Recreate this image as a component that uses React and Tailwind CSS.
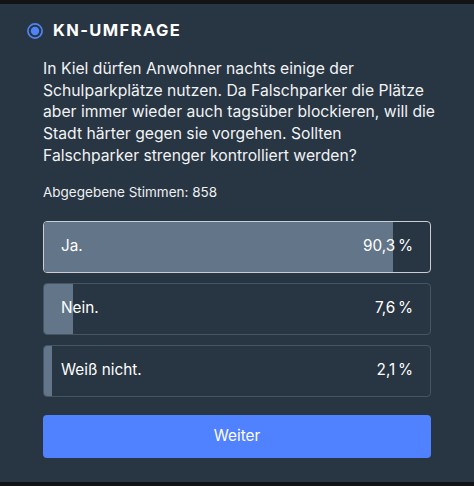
export default function App() {
  const options = [
    { label: "Ja.", value: 90.3, selected: true },
    { label: "Nein.", value: 7.6 },
    { label: "Weiß nicht.", value: 2.1 },
  ];

  return (
    <div className="w-[474px] h-[486px] bg-[#121314] flex flex-col font-['Inter',sans-serif] text-white">
      <div className="h-[4px] shrink-0" />
      <div className="flex-1 bg-[#283542] flex flex-col">
        {/* Header */}
        <div className="flex items-center gap-[10px] pl-[27px] pt-[15px] h-[38px]">
          <svg width="16" height="16" viewBox="0 0 16 16" className="shrink-0">
            <circle cx="8" cy="8" r="7.1" fill="none" stroke="#4f84f7" strokeWidth="1.7" />
            <circle cx="8" cy="8" r="4.2" fill="#4f84f7" />
          </svg>
          <span className="text-[16.5px] font-bold tracking-[0.085em] leading-none">KN-UMFRAGE</span>
        </div>

        <div className="px-[43px] pt-[16px] flex flex-col">
          <p className="text-[15.7px] leading-[21.7px] text-[#f1f3f5] whitespace-nowrap">
            In Kiel dürfen Anwohner nachts einige der
            <br />
            Schulparkplätze nutzen. Da Falschparker die Plätze
            <br />
            aber immer wieder auch tagsüber blockieren, will die
            <br />
            Stadt härter gegen sie vorgehen. Sollten
            <br />
            Falschparker strenger kontrolliert werden?
          </p>

          <p className="text-[13.5px] leading-[18px] mt-[16px] text-[#eef0f2]">Abgegebene Stimmen: 858</p>

          <div className="flex flex-col gap-[10px] mt-[20px]">
            {options.map((o) => (
              <div
                key={o.label}
                className={
                  "relative h-[52px] rounded-[4px] overflow-hidden flex items-center justify-between px-[17px] " +
                  (o.selected ? "border-[1.5px] border-[#c9ced3]" : "border border-[#475563]")
                }
              >
                <div
                  className="absolute left-0 top-0 bottom-0 bg-[#637588]"
                  style={{ width: `${o.value}%` }}
                />
                <span className="relative text-[15.3px]">{o.label}</span>
                <span className="relative text-[15.3px]">
                  {o.value.toString().replace(".", ",")}{"\u202F"}%
                </span>
              </div>
            ))}
          </div>

          <button className="mt-[18px] h-[43px] rounded-[4px] bg-[#5081ff] text-[15.3px] text-white">
            Weiter
          </button>
        </div>
      </div>
      <div className="h-[4px] shrink-0" />
    </div>
  );
}
